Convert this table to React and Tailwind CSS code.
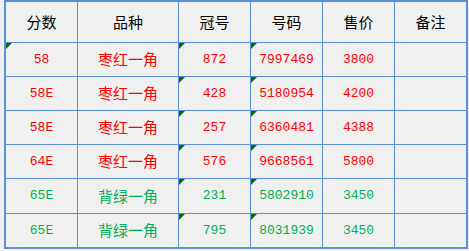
import React from 'react';

const headers = ['分数', '品种', '冠号', '号码', '售价', '备注'];

const rows = [
  { score: '58', kind: '枣红一角', crown: '872', num: '7997469', price: '3800', color: 'red', mark: true },
  { score: '58E', kind: '枣红一角', crown: '428', num: '5180954', price: '4200', color: 'red' },
  { score: '58E', kind: '枣红一角', crown: '257', num: '6360481', price: '4388', color: 'red' },
  { score: '64E', kind: '枣红一角', crown: '576', num: '9668561', price: '5800', color: 'red' },
  { score: '65E', kind: '背绿一角', crown: '231', num: '5802910', price: '3450', color: 'green' },
  { score: '65E', kind: '背绿一角', crown: '795', num: '8031939', price: '3450', color: 'green' },
];

const cjk = { fontFamily: '"Noto Sans CJK SC", sans-serif' };
const mono = { fontFamily: '"Liberation Mono", "DejaVu Sans Mono", monospace' };

// little green corner flag, like a spreadsheet "number stored as text" hint
const Flag = () => (
  <svg className="absolute left-0 top-0" width="6" height="6" viewBox="0 0 6 6">
    <polygon points="0,0 6,0 0,6" fill="#006e00" />
  </svg>
);

const Cell = ({ children, flag, font, className = '' }) => (
  <div
    className={`relative flex items-center justify-center bg-[#f0f0f0] ${className}`}
    style={font}
  >
    {flag && <Flag />}
    {children}
  </div>
);

const App = () => {
  return (
    <div className="w-[469px] h-[251px] bg-[#f0f0f0] pl-[4px]">
      <div className="w-[464px] border-2 border-[#5b8fd6] bg-[#5b8fd6] grid grid-cols-[71px_100px_71px_71px_71px_71px] grid-rows-[40px_33px_33px_33px_33px_34px_33px] gap-px">
        {headers.map((h) => (
          <Cell key={h} font={cjk} className="text-[15px] text-black">
            {h}
          </Cell>
        ))}
        {rows.map((r, i) => {
          const tone = r.color === 'red' ? 'text-[#ff0000]' : 'text-[#00b050]';
          return (
            <React.Fragment key={i}>
              <Cell flag={r.mark} font={mono} className={`text-[13px] ${tone}`}>
                {r.score}
              </Cell>
              <Cell font={cjk} className={`text-[15px] ${tone}`}>
                {r.kind}
              </Cell>
              <Cell flag font={mono} className={`text-[13px] ${tone}`}>
                {r.crown}
              </Cell>
              <Cell flag font={mono} className={`text-[13px] ${tone}`}>
                {r.num}
              </Cell>
              <Cell font={mono} className={`text-[13px] ${tone}`}>
                {r.price}
              </Cell>
              <Cell />
            </React.Fragment>
          );
        })}
      </div>
    </div>
  );
};

export default App;
